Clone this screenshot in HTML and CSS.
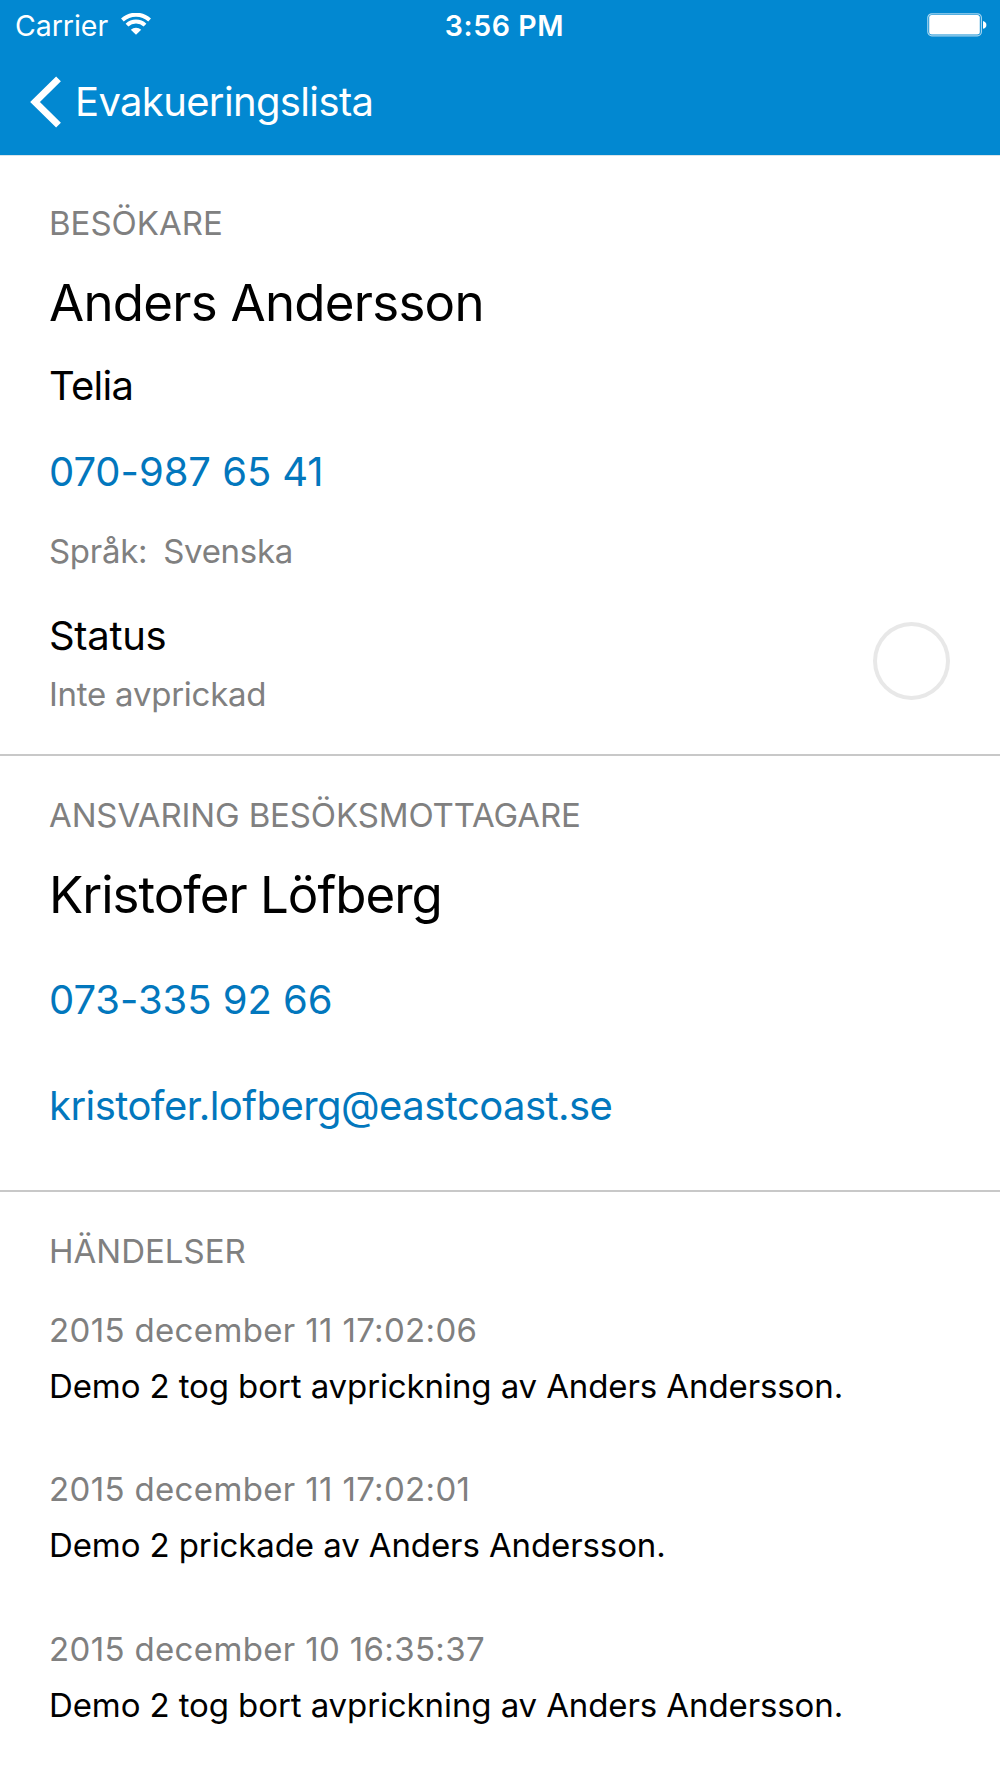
FILE: index.html
```html
<!DOCTYPE html><html lang="sv">
<head>
  <meta charset="UTF-8">
  <meta name="viewport" content="width=device-width, initial-scale=1.0">
  <title>Evakueringslista</title>
  <link rel="stylesheet" href="styles.css">
</head>
<body>
  <header>
    <div class="statusbar">
      <div class="carrier">
        <span>Carrier</span>
        <svg class="wifi" width="30" height="22" viewBox="0 0 30 22">
          <path d="M1.4 7A20 20 0 0 1 28.6 7" fill="none" stroke="#fff" stroke-width="4"/>
          <path d="M6 12.1A13 13 0 0 1 24 12.1" fill="none" stroke="#fff" stroke-width="4"/>
          <path d="M9.8 16.8A7.4 7.4 0 0 1 20.2 16.8L15 21.8Z" fill="#fff"/>
        </svg>
      </div>
      <div class="clock">3:56 PM</div>
      <svg class="battery" width="60" height="24" viewBox="0 0 60 24">
        <rect x="0.8" y="0.8" width="53.6" height="22" rx="4" fill="none" stroke="#fff" stroke-opacity="0.65" stroke-width="1.2"/>
        <rect x="2.2" y="2" width="50.6" height="19.4" rx="2.5" fill="#fff"/>
        <path d="M56 8C58.6 8.8 59.4 10.3 59.4 11.9S58.6 15 56 15.8Z" fill="#fff"/>
      </svg>
    </div>
    <a class="back" href="#">
      <svg width="32" height="52" viewBox="0 0 32 52">
        <path d="M28.5 2.8L5 26L28.5 49.2" fill="none" stroke="#fff" stroke-width="6.8"/>
      </svg>
      <span>Evakueringslista</span>
    </a>
  </header>

  <section class="visitor">
    <h2>BESÖKARE</h2>
    <p class="name">Anders Andersson</p>
    <p class="company">Telia</p>
    <a class="phone" href="#">070-987 65 41</a>
    <p class="language"><span>Språk:</span><span>Svenska</span></p>
    <div class="status">
      <div>
        <p class="status-title">Status</p>
        <p class="status-text">Inte avprickad</p>
      </div>
      <div class="check"></div>
    </div>
  </section>

  <section class="host">
    <h2>ANSVARING BESÖKSMOTTAGARE</h2>
    <p class="name">Kristofer Löfberg</p>
    <a class="phone" href="#">073-335 92 66</a>
    <a class="email" href="#">kristofer.lofberg@eastcoast.se</a>
  </section>

  <section class="events">
    <h2>HÄNDELSER</h2>
    <div class="event">
      <p class="date">2015 december 11 17:02:06</p>
      <p class="text">Demo 2 tog bort avprickning av Anders Andersson.</p>
    </div>
    <div class="event">
      <p class="date">2015 december 11 17:02:01</p>
      <p class="text">Demo 2 prickade av Anders Andersson.</p>
    </div>
    <div class="event">
      <p class="date">2015 december 10 16:35:37</p>
      <p class="text">Demo 2 tog bort avprickning av Anders Andersson.</p>
    </div>
  </section>
</body>
</html>
```
FILE: styles.css
```css
* { box-sizing: border-box; }
body { font-family: Inter, "Liberation Sans", sans-serif; font-size: 33px; line-height: 40px; background: #fff; color: #000; margin: 0; }
h2, p { margin: 0; font-size: 33px; font-weight: 400; }
a { text-decoration: none; }
svg { display: block; }

header { height: 156px; background: #0288d1; border-bottom: 1px solid #d9e4ea; color: #fff; }
.statusbar { display: grid; grid-template-columns: 1fr auto 1fr; padding: 8px 13px 0 15px; font-size: 28.5px; line-height: 35px; }
.carrier { display: flex; letter-spacing: -0.05px; }
.wifi { margin: 5px 0 0 13px; }
.clock { font-weight: 600; letter-spacing: 0.6px; padding-left: 7px; }
.battery { justify-self: end; margin-top: 5px; }
.back { display: flex; width: max-content; margin: 33px 0 0 30px; color: #fff; font-size: 40px; line-height: 47px; letter-spacing: -0.64px; }
.back span { margin: 2px 0 0 13px; }

section { padding: 0 49px; border-bottom: 2px solid #c8c8c8; }
h2, .language, .status-text, .date { color: #808080; }
.name { font-size: 51px; line-height: 61px; letter-spacing: -0.75px; margin-top: 29px; }
.company, .phone, .email, .status-title { display: block; font-size: 40px; line-height: 47px; }
.phone, .email { color: #0277bd; }

.visitor { padding-top: 47px; height: 600px; }
.company { margin-top: 29px; letter-spacing: -0.7px; }
.visitor .phone { margin-top: 39px; letter-spacing: -0.05px; }
.language { display: flex; gap: 16px; margin-top: 36px; letter-spacing: -0.3px; }
.status { display: flex; justify-content: space-between; margin-top: 41px; }
.status-title { letter-spacing: -0.33px; }
.status-text { margin-top: 15px; letter-spacing: -0.25px; }
.check { width: 77px; height: 78px; margin: 10px 1px 0 0; border: 4px solid #e8e8e8; border-radius: 50%; }

.host { padding-top: 39px; height: 436px; }
.host h2 { letter-spacing: -0.13px; }
.host .name { letter-spacing: -1px; }
.host .phone { margin-top: 51px; letter-spacing: -0.05px; }
.email { margin-top: 59px; letter-spacing: -0.55px; }

.events { padding-top: 39px; border-bottom: none; }
.events h2 { margin-bottom: 39px; }
.event { height: 159.4px; }
.date { letter-spacing: 0.35px; }
.text { margin-top: 16px; letter-spacing: -0.1px; }
```
